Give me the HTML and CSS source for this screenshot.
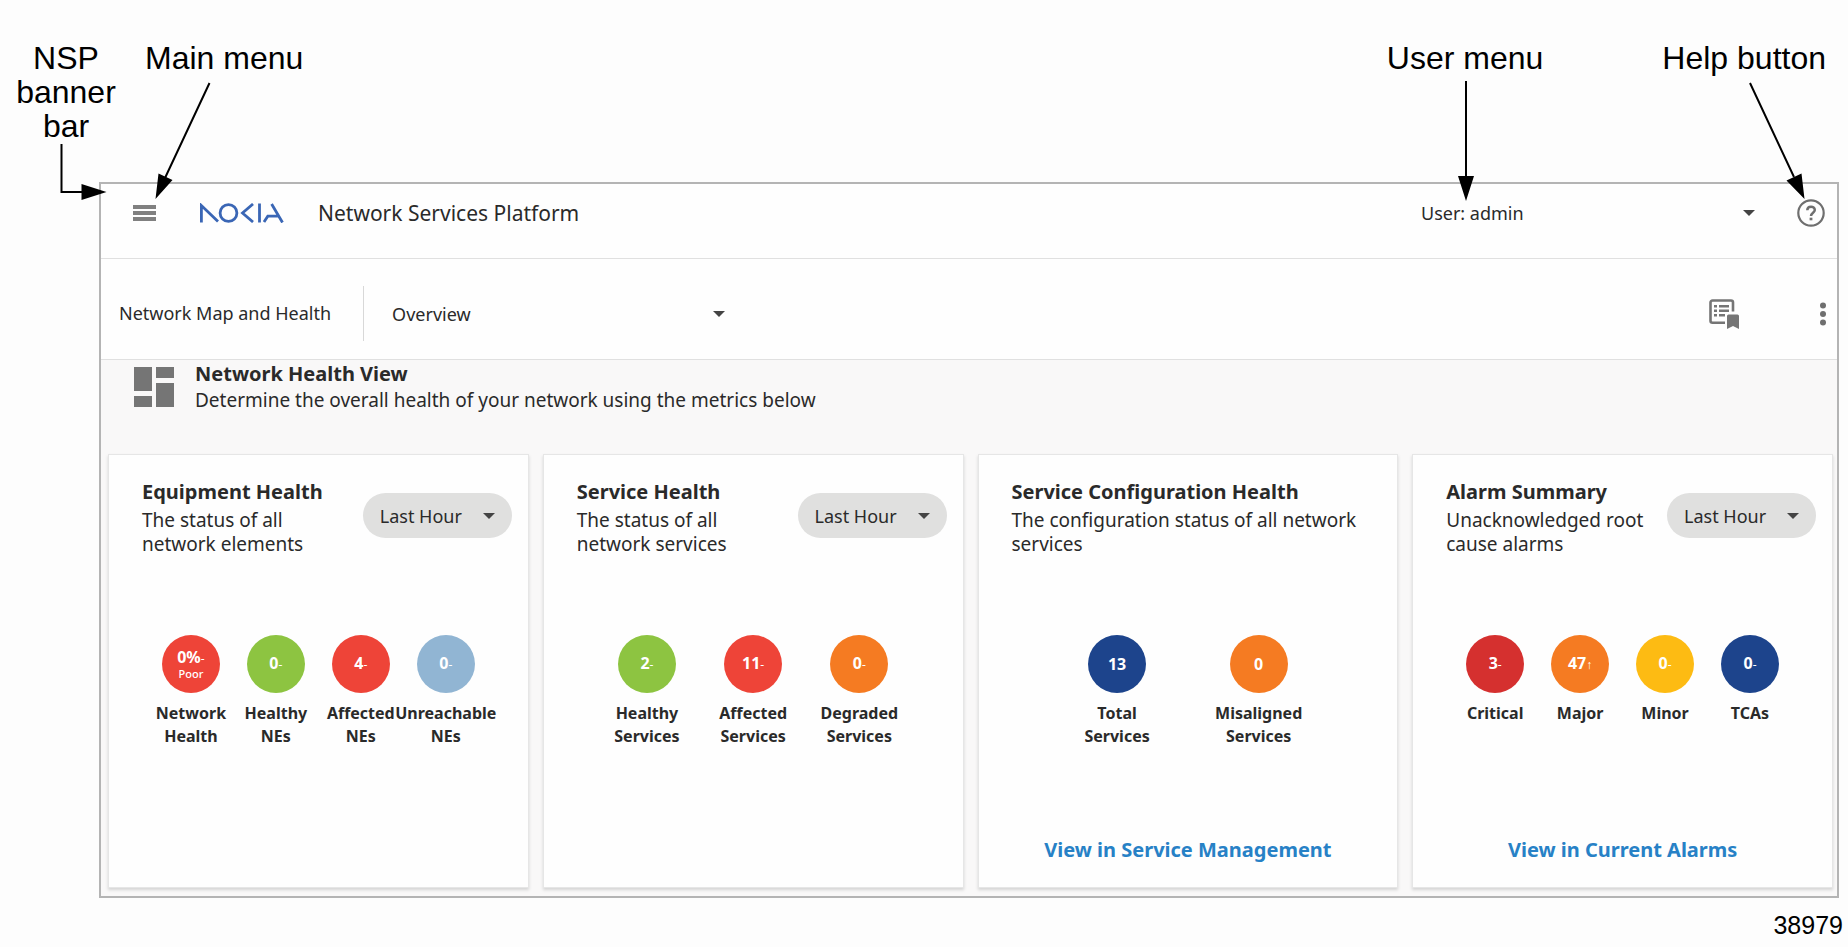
FILE: index.html
```html
<!DOCTYPE html>
<html lang="en">
<head>
    <meta charset="UTF-8">
    <meta name="viewport" content="width=device-width, initial-scale=1.0">
    <title>Network Services Platform</title>
    <link rel="stylesheet" href="styles.css">
</head>
<body>
    <!-- Labels above the app -->
    <div class="callouts">
        <span class="callout callout-banner">NSP banner bar</span>
        <span class="callout callout-main">Main menu</span>
        <span class="callout callout-user">User menu</span>
        <span class="callout">Help button</span>
    </div>

    <div class="app">
        <header class="banner">
            <button type="button" class="icon-button menu-button" aria-label="Main menu">
                <svg width="23" height="16" viewBox="0 0 23 16" fill="#808080"><path d="M0 0h23v4H0zM0 6h23v4H0zM0 12h23v4H0z"/></svg>
            </button>
            <svg class="logo" width="84" height="20" viewBox="0 0 84 20" fill="none" stroke="#3a66b5" stroke-width="2.8" role="img" aria-label="Nokia">
                <path d="M1.4 19.5V2.6L18 18.6"/>
                <ellipse cx="28.5" cy="10" rx="8.4" ry="8.4"/>
                <path d="M53 1L42.500 10L53 19M59.500 0.500V19.500M64 19L67.800 13.200H78M71.600 1L82.500 19.500"/>
            </svg>
            <h1 class="product">Network Services Platform</h1>
            <div class="dropdown user-menu">
                <select aria-label="User menu"><option>User: admin</option></select>
                <svg class="caret" width="12" height="6" viewBox="0 0 12 6"><path d="M0 0h12L6 6z"/></svg>
            </div>
            <button type="button" class="icon-button" aria-label="Help">
                <svg width="28" height="28" viewBox="0 0 28 28" fill="none" stroke="#6f6f6f" stroke-width="2.2">
                    <circle cx="14" cy="14" r="12.700"/>
                    <path d="M10.300 11.200C10.300 6.400 17.800 6.600 17.800 10.900C17.800 13.600 14 13.800 14 17" stroke-width="2.500"/>
                    <path d="M14 18.700v2.600" stroke-width="2.800"/>
                </svg>
            </button>
        </header>

        <nav class="toolbar">
            <span class="section-name">Network Map and Health</span>
            <div class="dropdown view-menu">
                <select aria-label="View"><option>Overview</option></select>
                <svg class="caret" width="12" height="6" viewBox="0 0 12 6"><path d="M0 0h12L6 6z"/></svg>
            </div>
            <button type="button" class="icon-button saved-views" aria-label="Saved views">
                <svg width="30" height="30" viewBox="0 0 30 30" fill="#757575">
                    <path d="M16 23.800H3.500A2 2 0 0 1 1.500 21.800V3.500A2 2 0 0 1 3.500 1.500H22A2 2 0 0 1 24 3.500V12.500" fill="none" stroke="#757575" stroke-width="2.600"/>
                    <path d="M5 6h3v2.500H5zM10 6h10v2.500H10zM5 10.500h3V13H5zM10 10.500h10V13H10zM5 15h3v2.500H5zM10 15h6v2.500h-6z"/>
                    <path d="M18 17a1.500 1.500 0 0 1 1.500-1.500h9a1.500 1.500 0 0 1 1.500 1.500v13l-6-3-6 3z"/>
                </svg>
            </button>
            <button type="button" class="icon-button" aria-label="More">
                <svg width="6" height="24" viewBox="0 0 6 24" fill="#6f6f6f"><circle cx="3" cy="3.500" r="3"/><circle cx="3" cy="12" r="3"/><circle cx="3" cy="20.500" r="3"/></svg>
            </button>
        </nav>

        <main class="health">
            <div class="health-header">
                <svg width="40" height="40" viewBox="0 0 40 40" fill="#757575"><path d="M0 0h18v24H0zM22 0h18v11H22zM0 29h18v11H0zM22 16h18v24H22z"/></svg>
                <div>
                    <h2 class="heading">Network Health View</h2>
                    <p class="description">Determine the overall health of your network using the metrics below</p>
                </div>
            </div>

            <div class="cards">
                <section class="card">
                    <div class="card-top">
                        <div>
                            <h2 class="heading">Equipment Health</h2>
                            <p class="summary">The status of all network elements</p>
                        </div>
                        <div class="dropdown period">
                            <select aria-label="Equipment Health period"><option>Last Hour</option></select>
                            <svg class="caret" width="12" height="6" viewBox="0 0 12 6"><path d="M0 0h12L6 6z"/></svg>
                        </div>
                    </div>
                    <div class="metrics">
                        <div class="metric"><div class="circle red"><div>0%<small>-</small></div><div class="rating">Poor</div></div><span class="label">Network Health</span></div>
                        <div class="metric"><div class="circle green"><div>0<small>-</small></div></div><span class="label">Healthy NEs</span></div>
                        <div class="metric"><div class="circle red"><div>4<small>-</small></div></div><span class="label">Affected NEs</span></div>
                        <div class="metric"><div class="circle light-blue"><div>0<small>-</small></div></div><span class="label">Unreachable NEs</span></div>
                    </div>
                </section>

                <section class="card">
                    <div class="card-top">
                        <div>
                            <h2 class="heading">Service Health</h2>
                            <p class="summary">The status of all network services</p>
                        </div>
                        <div class="dropdown period">
                            <select aria-label="Service Health period"><option>Last Hour</option></select>
                            <svg class="caret" width="12" height="6" viewBox="0 0 12 6"><path d="M0 0h12L6 6z"/></svg>
                        </div>
                    </div>
                    <div class="metrics">
                        <div class="metric"><div class="circle green"><div>2<small>-</small></div></div><span class="label">Healthy Services</span></div>
                        <div class="metric"><div class="circle red"><div>11<small>-</small></div></div><span class="label">Affected Services</span></div>
                        <div class="metric"><div class="circle orange"><div>0<small>-</small></div></div><span class="label">Degraded Services</span></div>
                    </div>
                </section>

                <section class="card">
                    <div class="card-top">
                        <div>
                            <h2 class="heading">Service Configuration Health</h2>
                            <p class="summary">The configuration status of all network services</p>
                        </div>
                    </div>
                    <div class="metrics">
                        <div class="metric"><div class="circle blue"><div>13</div></div><span class="label">Total Services</span></div>
                        <div class="metric"><div class="circle orange"><div>0</div></div><span class="label">Misaligned Services</span></div>
                    </div>
                    <a class="card-link" href="#service-management">View in Service Management</a>
                </section>

                <section class="card">
                    <div class="card-top">
                        <div>
                            <h2 class="heading">Alarm Summary</h2>
                            <p class="summary">Unacknowledged root cause alarms</p>
                        </div>
                        <div class="dropdown period">
                            <select aria-label="Alarm Summary period"><option>Last Hour</option></select>
                            <svg class="caret" width="12" height="6" viewBox="0 0 12 6"><path d="M0 0h12L6 6z"/></svg>
                        </div>
                    </div>
                    <div class="metrics">
                        <div class="metric"><div class="circle dark-red"><div>3<small>-</small></div></div><span class="label">Critical</span></div>
                        <div class="metric"><div class="circle orange"><div>47<small>↑</small></div></div><span class="label">Major</span></div>
                        <div class="metric"><div class="circle yellow"><div>0<small>-</small></div></div><span class="label">Minor</span></div>
                        <div class="metric"><div class="circle blue"><div>0<small>-</small></div></div><span class="label">TCAs</span></div>
                    </div>
                    <a class="card-link" href="#current-alarms">View in Current Alarms</a>
                </section>
            </div>
        </main>
    </div>

    <p class="figure-number">38979</p>

    <!-- Arrows from the labels to the app -->
    <svg class="arrows arrows-left" width="300" height="210" viewBox="0 0 300 210">
        <path class="line" d="M61.500 144V192H84M209.500 83L165 178"/>
        <path d="M81.500 184L106.500 192L81.500 200zM158.500 173.500L172.500 180L155.500 199z"/>
    </svg>
    <svg class="arrows arrows-right" width="448" height="210" viewBox="0 0 448 210">
        <path class="line" d="M66 81V178M350 83L394 177"/>
        <path d="M58 176H74L66 201zM386.500 180.500L401.500 173.500L404.500 199z"/>
    </svg>
</body>
</html>
```

FILE: styles.css
```css
* {
    box-sizing: border-box;
}

body {
    margin: 0;
    position: relative;
    background-color: #fdfdfd;
    color: #2a2a2a;
    font-family: "Noto Sans", "Open Sans", sans-serif;
    font-size: 18px;
}

h1, h2, p {
    margin: 0;
}

/* Labels and arrows */
.callouts {
    display: flex;
    align-items: flex-start;
    min-height: 182px;
    padding: 41px 22px 0 12px;
    color: #000;
    font-family: "Liberation Sans", Arial, sans-serif;
    font-size: 32px;
    line-height: 34px;
}

.callout-banner {
    width: 108px;
    text-align: center;
}

.callout-main {
    margin-left: 25px;
}

.callout-user {
    margin-left: auto;
    margin-right: 119px;
}

.arrows {
    position: absolute;
    top: 0;
    pointer-events: none;
}

.arrows-left {
    left: 0;
}

.arrows-right {
    right: 0;
}

.line {
    fill: none;
    stroke: #000;
    stroke-width: 2;
}

/* App frame */
.app {
    margin: 0 9px 0 99px;
    border: 2px solid #b4b4b4;
    background-color: #fefefe;
}

.icon-button {
    display: flex;
    padding: 0;
    border: none;
    background: none;
    cursor: pointer;
}

.dropdown {
    display: grid;
    align-items: center;
}

.dropdown select,
.caret {
    grid-area: 1 / 1;
}

.dropdown select {
    appearance: none;
    width: 100%;
    padding: 0;
    border: none;
    background: none;
    color: inherit;
    font: inherit;
}

.caret {
    justify-self: end;
    fill: #444;
    pointer-events: none;
}

.banner {
    display: flex;
    align-items: center;
    padding: 0 12px 16px 32px;
    height: 75px;
    border-bottom: 1px solid #e0e0e0;
}

.logo {
    margin-left: 44px;
}

.product {
    margin-left: 34px;
    font-size: 21px;
    font-weight: normal;
}

.user-menu {
    width: 334px;
    margin-left: auto;
    margin-right: 42px;
}

.toolbar {
    display: flex;
    align-items: center;
    padding: 27px 11px 18px 18px;
    border-bottom: 1px solid #e0e0e0;
}

.section-name {
    padding-right: 32px;
    border-right: 1px solid #d8d8d8;
    line-height: 55px;
}

.view-menu {
    width: 333px;
    margin-left: 28px;
}

.saved-views {
    margin-left: auto;
    margin-right: 81px;
}

/* Health view */
.health {
    padding: 0 4px 8px 7px;
    background-color: #f9f8f8;
}

.health-header {
    display: flex;
    align-items: center;
    gap: 21px;
    padding-left: 26px;
    height: 94px;
    padding-bottom: 41px;
}

.heading {
    font-size: 20px;
    font-weight: 700;
    line-height: 26px;
}

.description {
    font-size: 19px;
    line-height: 26px;
}

.cards {
    display: grid;
    grid-template-columns: repeat(4, 1fr);
    gap: 14px;
}

.card {
    display: flex;
    flex-direction: column;
    min-height: 434px;
    padding: 21px 16px 22px;
    border: 1px solid #e6e6e6;
    background-color: #fefefe;
    box-shadow: 0 2px 3px #d4d4d4;
}

.card-top {
    display: flex;
    justify-content: space-between;
    gap: 12px;
    height: 159px;
    padding-left: 17px;
}

.card .heading {
    line-height: 32px;
}

.summary {
    font-size: 19px;
    line-height: 24px;
}

.period {
    flex: none;
    width: 149px;
    height: 45px;
    margin-top: 17px;
    border-radius: 23px;
    background-color: #e0e0df;
}

.period select {
    height: 45px;
    padding-left: 17px;
}

.period .caret {
    margin-right: 17px;
}

.metrics {
    display: flex;
    justify-content: space-evenly;
    padding: 0 10px;
}

.metric {
    display: flex;
    flex-direction: column;
    align-items: center;
    width: 58px;
}

.circle {
    display: flex;
    flex-direction: column;
    align-items: center;
    justify-content: center;
    width: 58px;
    height: 58px;
    border-radius: 50%;
    color: #fff;
    font-size: 16px;
    font-weight: 700;
    line-height: 18px;
}

.circle small {
    font-size: 12px;
    font-weight: normal;
}

.rating {
    font-size: 11px;
    font-weight: 500;
    line-height: 12px;
}

.red {
    background-color: #ee4438;
}

.dark-red {
    background-color: #d5302f;
}

.green {
    background-color: #8dc441;
}

.orange {
    background-color: #f57b22;
}

.yellow {
    background-color: #fdbb13;
}

.blue {
    background-color: #1d448c;
}

.light-blue {
    background-color: #91b5d3;
}

.label {
    width: min-content;
    margin-top: 9px;
    font-size: 16px;
    font-weight: 700;
    line-height: 23px;
    text-align: center;
}

.card-link {
    align-self: center;
    margin-top: auto;
    color: #2781c6;
    font-size: 20px;
    font-weight: 700;
    line-height: 30px;
    text-decoration: none;
}

.figure-number {
    padding: 13px 5px 0 0;
    color: #000;
    font-family: "Liberation Sans", Arial, sans-serif;
    font-size: 25px;
    line-height: 28px;
    text-align: right;
}
```
